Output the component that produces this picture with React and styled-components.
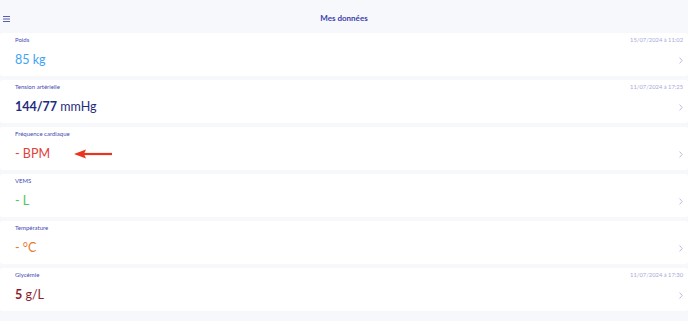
import styled, { createGlobalStyle } from 'styled-components';

const Global = createGlobalStyle`
    body {
        margin: 0;
        background: #f7f8fc;
        font-family: Lato, "Open Sans", sans-serif;
    }
`;

const Page = styled.div`
    width: 688px;
    height: 321px;
    background: #f7f8fc;
    overflow: hidden;
`;

const Header = styled.div`
    height: 33px;
    display: flex;
    align-items: center;
    justify-content: center;
    position: relative;
`;

const Burger = styled.svg`
    position: absolute;
    left: 3px;
    top: 16px;
`;

const Title = styled.span`
    font-size: 8px;
    font-weight: 700;
    color: #3b40ad;
    margin-top: 3px;
`;

const List = styled.div`
    display: flex;
    flex-direction: column;
    gap: 4px;
`;

const Card = styled.div`
    height: 43px;
    box-sizing: border-box;
    background: #fff;
    border-radius: 3px;
    padding: 3px 5px 0 15px;
    display: flex;
    flex-direction: column;
`;

const Top = styled.div`
    display: flex;
    justify-content: space-between;
    font-size: 6px;
    line-height: 8px;
`;

const Label = styled.span`
    color: #4449b3;
`;

const Date = styled.span`
    color: #a6a9da;
    font-size: 5.8px;
`;

const Bottom = styled.div`
    display: flex;
    align-items: center;
    justify-content: space-between;
    margin-top: 7px;
`;

const Value = styled.div`
    display: flex;
    align-items: center;
    font-size: 12.5px;
    line-height: 17px;
    color: ${p => p.color};
    b { font-weight: 700; }
`;

const Chevron = styled.svg`
    margin-top: 1px;
`;

const Arrow = styled.svg`
    margin-left: 24px;
`;

const rows = [
    { label: 'Poids', date: '15/07/2024 à 11:02', color: '#3da3f5', value: '85 kg' },
    { label: 'Tension artérielle', date: '11/07/2024 à 17:25', color: '#1f2c7c', bold: '144/77', value: ' mmHg' },
    { label: 'Fréquence cardiaque', color: '#e2403b', value: '- BPM', arrow: true },
    { label: 'VEMS', color: '#4cc45a', value: '- L' },
    { label: 'Température', color: '#e37b32', value: '- °C' },
    { label: 'Glycémie', date: '11/07/2024 à 17:30', color: '#8a1b2c', bold: '5', value: ' g/L' },
];

const App = () => {
    return (
    <Page>
        <Global />
        <Header>
            <Burger width="7" height="6" viewBox="0 0 7 6">
                <rect y="0" width="7" height="1" fill="#5a5db0" />
                <rect y="2.5" width="7" height="1" fill="#5a5db0" />
                <rect y="5" width="7" height="1" fill="#5a5db0" />
            </Burger>
            <Title>Mes données</Title>
        </Header>
        <List>
            {rows.map(r => (
                <Card key={r.label}>
                    <Top>
                        <Label>{r.label}</Label>
                        {r.date && <Date>{r.date}</Date>}
                    </Top>
                    <Bottom>
                        <Value color={r.color}>
                            {r.bold && <b>{r.bold}</b>}
                            <span style={{ whiteSpace: 'pre' }}>{r.value}</span>
                            {r.arrow && (
                                <Arrow width="38" height="10" viewBox="0 0 38 10">
                                    <path d="M10 5 H38" stroke="#e8351f" strokeWidth="2.2" />
                                    <path d="M0 5 L12 0.5 L10 5 L12 9.5 Z" fill="#e8351f" />
                                </Arrow>
                            )}
                        </Value>
                        <Chevron width="4" height="7" viewBox="0 0 4 7">
                            <path d="M0.6 0.6 L3.2 3.5 L0.6 6.4" fill="none" stroke="#b3b5dc" strokeWidth="0.9" />
                        </Chevron>
                    </Bottom>
                </Card>
            ))}
        </List>
    </Page>
    );
}

export default App;
